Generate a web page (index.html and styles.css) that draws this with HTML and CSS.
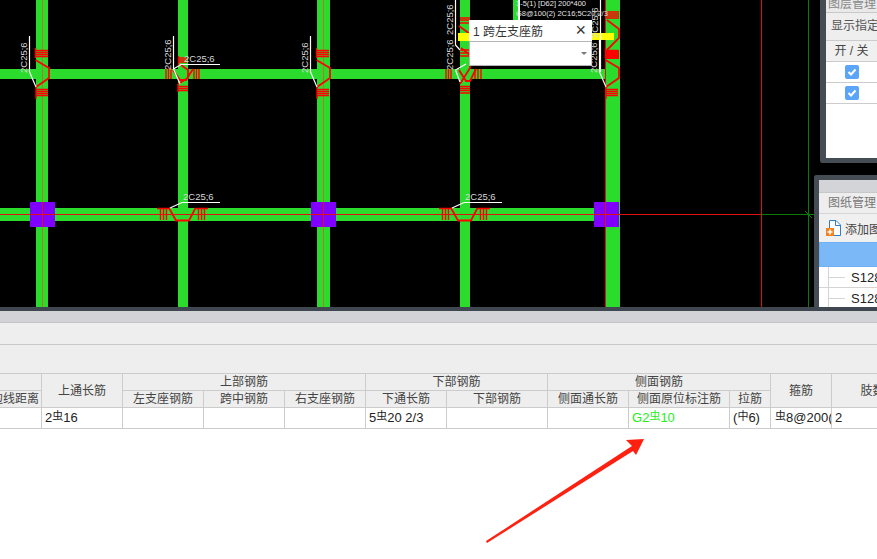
FILE: index.html
```html
<!DOCTYPE html>
<html lang="zh">
<head>
<meta charset="utf-8">
<title>钢筋</title>
<link rel="stylesheet" href="styles.css">
</head>
<body>
<div class="page">
  <section class="canvas">
    <svg class="cad" width="877" height="307" viewBox="0 0 877 307">
      <defs>
        <g id="vjoint">
          <path class="ln-red" d="M35.500 48V58M35 50.500H48M35 52.500H48M35 54.500H48M35 56.500H48M36 87V99M36 89.500H48M36 91.500H48M36 93.500H48M36 95.500H48"/>
          <path class="ln-red-thick" d="M35.500 60L49 68V78L36 87"/>
          <path class="ln-white" d="M29.500 36V72L36 87"/>
          <text class="cad-text" transform="translate(27 73) rotate(-90)">2C25;6</text>
        </g>
        <g id="hjoint">
          <path class="ln-red" d="M157 208.500H170M196 208.500H208M160.500 208V220M163.500 208V220M166.500 208V220M198.500 208V220M201.500 208V220M204.500 208V220"/>
          <path class="ln-red-thick" d="M169 208L176 220.500H189L195.500 208"/>
          <path class="ln-white" d="M170 208L182 202.500H220"/>
          <text class="cad-text" x="183" y="200">2C25;6</text>
        </g>
      </defs>

      <!-- beams -->
      <rect class="beam" x="36" y="0" width="12" height="307"/>
      <rect class="beam" x="178" y="0" width="10" height="307"/>
      <rect class="beam" x="317" y="0" width="13" height="307"/>
      <rect class="beam" x="460" y="0" width="10" height="307"/>
      <rect class="beam" x="606" y="0" width="14" height="307"/>
      <rect class="beam" x="0" y="69" width="606" height="10"/>
      <rect class="beam" x="0" y="208" width="606" height="13"/>

      <!-- axis lines -->
      <path class="ln-axis-dull" d="M42.500 0V307M323.500 0V307"/>
      <path class="ln-axis-red" d="M605.500 0V307M761.500 0V307M0 214.500H761"/>
      <path class="ln-axis-green" d="M808.500 0V307M761 214.500H815M805 211L812 218"/>

      <!-- joints, top row -->
      <use href="#vjoint"/>
      <use href="#vjoint" x="281"/>
      <use href="#vjoint" x="570"/>

      <g>
        <path class="ln-red" d="M178.500 56V66M179 58H187M179 60H187M179 62H187M166 68.500V79M168.500 68.500V79M171 68.500V79M194 69V79M196.500 69V79M199 69V79M178 86.500H188M178 88.500H188M178 90.500H188M178 84V92"/>
        <path class="ln-red-thick" d="M173 70L180 80H186L193 69M181 65L188 70V78L178 84"/>
        <path class="ln-white" d="M173.500 36V69L181 64.500H220M173.500 69L180 84"/>
        <text class="cad-text" transform="translate(171 70) rotate(-90)">2C25;6</text>
        <text class="cad-text" x="184" y="62">2C25;6</text>
      </g>

      <g>
        <path class="ln-red" d="M446 69V79M448.500 69V79M451 69V79M475 69V79M478 69V79M481 69V79M460 86.500H470M460 88.500H470M460 90.500H470M460 93H470M460 18H470M460 20H470M460 23H470M460 50H470M460 53H470M460 56H470"/>
        <path class="ln-red-thick" d="M459 26L470 34M459 70L466 81H470L476 69M461 48L470 55V68L460 84"/>
        <rect class="block-yellow" x="458" y="33" width="11" height="8"/>
        <path class="ln-white" d="M455.500 0V45L460 50M455.500 70L460 82M455.500 70L466 64"/>
        <text class="cad-text" transform="translate(453 35) rotate(-90)">2C25;6</text>
        <text class="cad-text" transform="translate(453 70) rotate(-90)">2C25;6</text>
      </g>

      <g>
        <rect class="block-red" x="606" y="50" width="13" height="9"/>
        <path class="ln-red" d="M606 12H619M606 14H619M606 16H619M606 18H619"/>
        <path class="ln-red-thick" d="M607 20L619 29V38L607 50"/>
        <rect class="block-yellow" x="592" y="33" width="22" height="7"/>
        <path class="ln-white" d="M600.500 0V72"/>
        <text class="cad-text" transform="translate(598 38) rotate(-90)">2C25;6</text>
      </g>

      <!-- joints, bottom row -->
      <use href="#hjoint"/>
      <use href="#hjoint" x="282"/>

      <!-- columns -->
      <rect class="column" x="30" y="202" width="25" height="25"/>
      <rect class="column" x="311" y="202" width="25" height="25"/>
      <rect class="column" x="594" y="202" width="25" height="25"/>
      <path class="ln-axis-red" d="M42.500 202V227M30 214.500H55M323.500 202V227M311 214.500H336M605.500 202V227M594 214.500H619"/>

      <!-- beam annotation -->
      <rect class="beam" x="513" y="0" width="5" height="20"/>
      <rect class="leader-bar" x="518" y="0" width="2" height="20"/>
      <text class="cad-note" x="516" y="6">1-5(1) [D62] 200*400</text>
      <text class="cad-note" x="516" y="16">G8@100(2) 2C16;5C20 2/3</text>
    </svg>

    <div class="popup">
      <div class="popup-head"><span>1 跨左支座筋</span><span class="popup-close">×</span></div>
      <div class="popup-select"><i class="caret"></i></div>
    </div>

    <aside class="panel panel-layers">
      <div class="panel-title">图层管理</div>
      <div class="panel-option">显示指定图层</div>
      <div class="switch-head">开 / 关</div>
      <div class="switch-row"><i class="check"><svg width="14" height="14" viewBox="0 0 14 14"><path d="M3.500 7L6 9.500L10.500 4.500"/></svg></i></div>
      <div class="switch-row"><i class="check"><svg width="14" height="14" viewBox="0 0 14 14"><path d="M3.500 7L6 9.500L10.500 4.500"/></svg></i></div>
    </aside>

    <aside class="panel panel-drawings">
      <div class="panel-bar"></div>
      <div class="panel-option">图纸管理</div>
      <div class="panel-tool">
        <svg width="16" height="16" viewBox="0 0 16 16">
          <path class="doc" d="M3.500 8V0.500H10L14.500 5V15.500H8"/>
          <path class="doc" d="M9.500 1V5.500H14"/>
          <rect class="doc-plus" x="0" y="8" width="8" height="8"/>
          <path class="doc-cross" d="M4 9.500V14.500M1.500 12H6.500"/>
        </svg>
        <span>添加图纸</span>
      </div>
      <div class="sheet-selected"></div>
      <div class="sheet-row"><i class="tree"></i><span>S128-1</span></div>
      <div class="sheet-row"><i class="tree"></i><span>S128-2</span></div>
    </aside>
  </section>

  <section class="bottom">
    <div class="bottom-title"></div>
    <div class="bottom-tabs"></div>
    <div class="bottom-tools"></div>
    <table class="grid">
      <colgroup>
        <col class="w77"><col class="w81"><col class="w81"><col class="w81"><col class="w81"><col class="w81"><col class="w101"><col class="w81"><col class="w101"><col class="w41"><col class="w61"><col class="w82">
      </colgroup>
      <tr class="row-top">
        <th></th>
        <th rowspan="2">上通长筋</th>
        <th colspan="3">上部钢筋</th>
        <th colspan="2">下部钢筋</th>
        <th colspan="3">侧面钢筋</th>
        <th rowspan="2">箍筋</th>
        <th rowspan="2">肢数</th>
      </tr>
      <tr class="row-sub">
        <th>距左边线距离</th>
        <th>左支座钢筋</th>
        <th>跨中钢筋</th>
        <th>右支座钢筋</th>
        <th>下通长筋</th>
        <th>下部钢筋</th>
        <th>侧面通长筋</th>
        <th>侧面原位标注筋</th>
        <th>拉筋</th>
      </tr>
      <tr class="row-data">
        <td></td>
        <td>2<span class="bar">虫</span>16</td>
        <td></td>
        <td></td>
        <td></td>
        <td>5<span class="bar">虫</span>20 2/3</td>
        <td></td>
        <td></td>
        <td class="green">G2<span class="bar">虫</span>10</td>
        <td>(<span class="bar">中</span>6)</td>
        <td class="clip"><span class="bar">虫</span>8@200(2)</td>
        <td>2</td>
      </tr>
    </table>
  </section>

  <svg class="arrow" width="877" height="559" viewBox="0 0 877 559">
    <path d="M486 541L632 446L626 440L644 439L636 455L633 451L487 543Z"/>
  </svg>
</div>
</body>
</html>
```
FILE: styles.css
```css
* { box-sizing: border-box; }
html, body { margin: 0; padding: 0; background: #fff; }
body { font-family: "Liberation Sans", "Noto Sans CJK SC", sans-serif; color: #333; }

.page { position: relative; width: 877px; height: 559px; overflow: hidden; background: #fff; }

/* CAD canvas */
.canvas { position: relative; height: 307px; background: #000; overflow: hidden; }
.cad { display: block; }
.beam { fill: #2bdc2d; }
.column { fill: #8000ff; }
.block-red { fill: #f00; }
.block-yellow { fill: #ff0; }
.leader-bar { fill: #fff; }
.ln-red { fill: none; stroke: #f00; stroke-width: 1.400; }
.ln-red-thick { fill: none; stroke: #f00; stroke-width: 1.800; }
.ln-white { fill: none; stroke: #fff; stroke-width: 1.200; }
.ln-axis-red { fill: none; stroke: #e01010; stroke-width: 1; }
.ln-axis-dull { fill: none; stroke: #c0702a; stroke-width: 1; }
.ln-axis-green { fill: none; stroke: #0a7a0a; stroke-width: 1; }
.cad-text { font-family: "Liberation Sans", sans-serif; font-size: 9.500px; fill: #d8d8d8; }
.cad-note { font-family: "Liberation Sans", sans-serif; font-size: 7.500px; fill: #e4e4e4; }

/* Popup */
.popup { position: absolute; left: 469px; top: 20px; width: 123px; height: 46px; background: #fff; }
.popup-head { display: flex; justify-content: space-between; align-items: center; height: 20px; padding: 0 6px 0 4px; font-size: 12px; color: #333; }
.popup-close { font-size: 18px; line-height: 20px; color: #333; }
.popup-select { position: relative; height: 25px; margin-top: 1px; border: 1px solid #b5b5b5; border-right-color: #ccc; background: #fff; }
.caret { position: absolute; right: 4px; top: 10px; border-left: 3px solid transparent; border-right: 3px solid transparent; border-top: 3px solid #777; }

/* Side panels */
.panel { position: absolute; background: #fff; border: 5px solid #454c54; border-right: 0; }
.panel-layers { left: 820px; top: -8px; width: 71px; height: 171px; border-left-width: 6px; border-bottom-left-radius: 3px; padding-right: 14px; }
.panel-drawings { left: 814px; top: 175px; width: 80px; height: 140px; border-bottom: 0; border-top-left-radius: 3px; }
.panel-title { height: 16px; line-height: 14px; font-size: 12px; padding-left: 2px; color: #888; background: #e9e9e9; border-bottom: 1px solid #c8c8c8; white-space: nowrap; overflow: hidden; }
.panel-bar { height: 13px; background: #d3d4d8; border-bottom: 1px solid #c8c8c8; }
.panel-layers .panel-option { height: 27px; line-height: 27px; font-size: 12px; padding-left: 5px; color: #555; background: #eee; white-space: nowrap; overflow: hidden; }
.panel-drawings .panel-option { height: 21px; line-height: 20px; font-size: 12px; padding-left: 9px; color: #777; background: #eee; border-bottom: 1px solid #d4d4d4; white-space: nowrap; overflow: hidden; }
.switch-head { height: 22px; line-height: 20px; text-align: center; font-size: 12px; color: #444; background: #f0f0f0; border-top: 1px solid #ccc; border-bottom: 1px solid #ccc; white-space: nowrap; }
.switch-row { display: flex; align-items: center; justify-content: center; height: 21px; border-bottom: 1px solid #ccc; }
.check { display: block; width: 14px; height: 14px; background: #5aa5f9; border-radius: 2px; }
.check svg { display: block; }
.check path { fill: none; stroke: #fff; stroke-width: 2; }
.panel-tool { display: flex; align-items: center; gap: 3px; height: 28px; padding-left: 7px; font-size: 12px; color: #444; background: #f0f0f0; white-space: nowrap; }
.doc { fill: #fff; stroke: #2f7fc4; stroke-width: 1; }
.doc-plus { fill: #f58220; }
.doc-cross { fill: none; stroke: #fff; stroke-width: 1.500; }
.sheet-selected { height: 25px; background: #7bb8f8; border: 1px solid #6fb0f5; }
.sheet-row { display: flex; align-items: center; height: 21px; font-size: 13px; color: #222; border-bottom: 1px solid #d4d4d4; white-space: nowrap; }
.tree { display: flex; align-items: center; align-self: stretch; width: 17px; margin: 0 6px 0 9px; border-left: 1px solid #d4d4d4; flex: none; }
.tree::after { content: ""; display: block; width: 100%; height: 1px; background: #d4d4d4; }

/* Bottom property panel */
.bottom { height: 252px; overflow: hidden; }
.bottom-title { height: 4px; background: #3f4750; }
.bottom-tabs { height: 12px; background: #d2d3d7; border-bottom: 1px solid #c4c4c4; }
.bottom-tools { height: 50px; background: #eee; position: relative; }
.bottom-tools::after { content: ""; position: absolute; left: 0; right: 0; top: 21px; height: 1px; background: #c8c8c8; }

.grid { border-collapse: collapse; table-layout: fixed; width: 898px; margin-left: -36px; font-size: 12px; }
.w41 { width: 41px; } .w61 { width: 61px; } .w77 { width: 77px; } .w81 { width: 81px; } .w82 { width: 82px; } .w101 { width: 101px; }
.grid th, .grid td { border: 1px solid #ccc; padding: 0; white-space: nowrap; overflow: hidden; }
.grid th { font-weight: 400; line-height: 14px; background: #eee; color: #444; text-align: center; }
.grid td { background: #fff; color: #222; line-height: 18px; padding-left: 3px; font-size: 13px; }
.row-top { height: 17px; }
.row-sub { height: 17px; }
.row-data { height: 21px; }
.bar { font-size: 11px; position: relative; top: -2px; }
.grid td.green { color: #22ee22; }
.grid td.clip { padding-left: 4px; }

/* Red annotation arrow */
.arrow { position: absolute; left: 0; top: 0; pointer-events: none; }
.arrow path { fill: #ff2010; }
```
